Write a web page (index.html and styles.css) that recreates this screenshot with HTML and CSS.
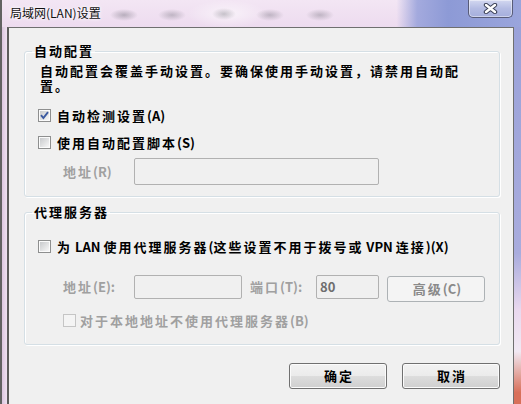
FILE: index.html
```html
<!DOCTYPE html>
<html>
	<head>
		<meta charset="utf-8" />
		<title>局域网(LAN)设置</title>
		<link rel="stylesheet" href="styles.css">
	</head>
	<body>
		<div class="window">
			<div class="titlebar">
				<span class="title">局域网(LAN)设置</span>
				<div class="close">
					<svg width="15" height="11" viewBox="0 0 15 11">
						<path d="M3 2 L12 9 M12 2 L3 9" stroke="#3a3f55" stroke-width="4.4" stroke-linecap="round"/>
						<path d="M3 2 L12 9 M12 2 L3 9" stroke="#ffffff" stroke-width="2.4" stroke-linecap="round"/>
					</svg>
				</div>
			</div>
			<div class="frame">
				<div class="content">
					<fieldset class="group">
						<legend>自动配置</legend>
						<p class="note">自动配置会覆盖手动设置。要确保使用手动设置，请禁用自动配<br>置。</p>
						<label class="check">
							<span class="cb checked">
								<svg width="9" height="9" viewBox="0 0 9 9"><path d="M1 4.2 L3.4 7 L8 1.2" fill="none" stroke="#3b5aa0" stroke-width="1.9"/></svg>
							</span>
							<span>自动检测设置<span class="en">(A)</span></span>
						</label>
						<label class="check">
							<span class="cb"></span>
							<span>使用自动配置脚本<span class="en">(S)</span></span>
						</label>
						<div class="field-row">
							<span class="field-label">地址<span class="en">(R)</span></span>
							<span class="textbox script-addr"></span>
						</div>
					</fieldset>
					<fieldset class="group proxy">
						<legend>代理服务器</legend>
						<label class="check">
							<span class="cb"></span>
							<span>为<span class="en"> LAN </span>使用代理服务器<span class="en">(</span>这些设置不用于拨号或<span class="en"> VPN </span>连接<span class="en">)(X)</span></span>
						</label>
						<div class="field-row proxy-row">
							<span class="field-label">地址<span class="en">(E):</span></span>
							<span class="textbox proxy-addr"></span>
							<span class="field-label port-label">端口<span class="en">(T):</span></span>
							<span class="textbox port">80</span>
							<button class="btn" disabled>高级<span class="en">(C)</span></button>
						</div>
						<label class="check sub disabled">
							<span class="cb"></span>
							<span>对于本地地址不使用代理服务器<span class="en">(B)</span></span>
						</label>
					</fieldset>
					<div class="actions">
						<button class="btn">确定</button>
						<button class="btn">取消</button>
					</div>
				</div>
			</div>
		</div>
	</body>
</html>
```

FILE: styles.css
```css
body, html {
	width: 521px;
	height: 404px;
	padding: 0;
	margin: 0;
	overflow: hidden;
}
body {
	font-family: "Noto Sans CJK SC", "Liberation Sans", sans-serif;
	color: #000;
}

.window {
	display: flex;
	flex-direction: column;
	height: 404px;
	box-sizing: border-box;
	border-left: 2px solid #626262;
}

/* aero title bar, with a blurred window behind it */
.titlebar {
	height: 27px;
	flex: none;
	display: flex;
	justify-content: space-between;
	align-items: flex-start;
	padding: 0 8px 0 8px;
	background:
		radial-gradient(ellipse 14px 6px at 122px 15px, rgba(80,80,90,.35), transparent),
		radial-gradient(ellipse 14px 6px at 170px 15px, rgba(80,80,90,.3), transparent),
		radial-gradient(ellipse 12px 6px at 222px 14px, rgba(80,80,90,.3), transparent),
		radial-gradient(ellipse 14px 6px at 268px 15px, rgba(80,80,90,.3), transparent),
		radial-gradient(ellipse 14px 6px at 318px 15px, rgba(80,80,90,.3), transparent),
		radial-gradient(ellipse 40px 14px at 225px 14px, rgba(255,255,255,.6), transparent),
		linear-gradient(to right, rgba(140,152,214,0) 0, rgba(140,152,214,0) 76%, rgba(150,160,218,.85) 80%, #8d9ad6 86%, #9aa5dc 100%),
		linear-gradient(#f3e6f4, #eddbef);
}
.title {
	font-size: 12px;
	line-height: 26px;
	color: #111;
	text-shadow: 0 0 5px #fff, 0 0 3px #fff;
}
.close {
	width: 45px;
	height: 18px;
	box-sizing: border-box;
	border: 1px solid #585c78;
	border-top: none;
	border-radius: 0 0 5px 5px;
	background: linear-gradient(#d3d8f0, #b4bce3 50%, #a5aedc);
	box-shadow: inset 0 0 0 1px rgba(255,255,255,.45);
	display: flex;
	align-items: center;
	justify-content: center;
}

.frame {
	flex: 1;
	display: flex;
	padding: 0 7px 0 5px;
	background:
		linear-gradient(#9aa2d9, #a9acdd 60%, #e9d8ee 75%, #f1e9f3 86%, #d8705a 97%) right top / 7px 100% no-repeat,
		linear-gradient(to right, #dcc7e0, #efe1f1) left top / 5px 100% no-repeat,
		#e8d8ec;
}
.content {
	flex: 1;
	min-width: 0;
	background: #f0f0f0;
	border: 1px solid #6f6f6f;
	border-left: 2px solid #5c5c5c;
	border-bottom: none;
	padding: 14px 13px 0 15px;
}

.group {
	margin: 0;
	min-width: 0;
	padding: 3px 12px 11px 12px;
	border: 1px solid #d5dfe5;
	border-radius: 3px;
	box-shadow: inset 1px 1px 0 #fff, 1px 1px 0 #fff;
}
.group.proxy {
	margin-top: 6px;
	padding-top: 15px;
	padding-bottom: 14px;
}
.group legend {
	font-size: 13px;
	font-weight: bold;
	letter-spacing: 2px;
	line-height: 18px;
	padding: 0 1px 0 2px;
	margin-left: -5px;
}

.note {
	margin: 0 0 12px 3px;
	font-size: 13px;
	font-weight: bold;
	letter-spacing: 2px;
	line-height: 15px;
	white-space: nowrap;
}

/* latin runs are narrow in the dialog font */
.en {
	letter-spacing: 0;
}

.check {
	display: flex;
	align-items: center;
	height: 20px;
	gap: 6px;
	font-size: 13px;
	font-weight: bold;
	letter-spacing: 2px;
	white-space: pre;
}
.check + .check {
	margin-top: 7px;
}
.check.sub {
	margin-left: 25px;
	margin-top: 8px;
	gap: 4px;
}
.check.disabled {
	color: #a0a0a0;
}

.cb {
	flex: none;
	width: 13px;
	height: 13px;
	margin-left: 1px;
	box-sizing: border-box;
	border: 1px solid #8e8f8f;
	padding: 1px;
	background: linear-gradient(135deg, #c8cacc, #f7f7f7) content-box, #fbfbfb;
	display: flex;
	align-items: center;
	justify-content: center;
}
.cb svg {
	display: block;
}
.check.disabled .cb {
	border-color: #c5c5c5;
	background: #f4f4f4;
}

.field-row {
	display: flex;
	align-items: center;
	margin-top: 6px;
	font-size: 13px;
	font-weight: bold;
	letter-spacing: 2px;
	color: #a0a0a0;
}
.field-label {
	width: 71px;
	margin-left: 26px;
	flex: none;
	white-space: nowrap;
}
.textbox {
	display: block;
	box-sizing: border-box;
	border: 1px solid #b1b1b1;
	border-radius: 2px;
	background: #f0f0f0;
}
.script-addr {
	width: 245px;
	height: 27px;
}

.proxy-row {
	margin-top: 19px;
	align-items: flex-start;
	height: 27px;
	line-height: 24px;
}
.proxy-addr {
	width: 108px;
	height: 24px;
}
.port-label {
	margin-left: 8px;
	width: 66px;
}
.port {
	width: 63px;
	height: 24px;
	padding-left: 3px;
	line-height: 22px;
	font-size: 13px;
	color: #6e6e6e;
	letter-spacing: 0;
}

.btn {
	width: 98px;
	height: 26px;
	padding: 0 0 0 2px;
	box-sizing: border-box;
	border: 1px solid #707070;
	border-radius: 3px;
	background: linear-gradient(#f2f2f2, #ebebeb 50%, #dddddd 50%, #cfcfcf);
	box-shadow: inset 0 0 0 1px #fbfbfb;
	font-family: inherit;
	font-size: 13px;
	font-weight: bold;
	letter-spacing: 2px;
	color: #000;
	line-height: 22px;
}
.btn[disabled] {
	margin-left: 8px;
	margin-top: 1px;
	border-color: #adb2b5;
	background: #f4f4f4;
	box-shadow: none;
	color: #8a8a8a;
}

.actions {
	display: flex;
	justify-content: flex-end;
	gap: 15px;
	margin-top: 18px;
}
```
